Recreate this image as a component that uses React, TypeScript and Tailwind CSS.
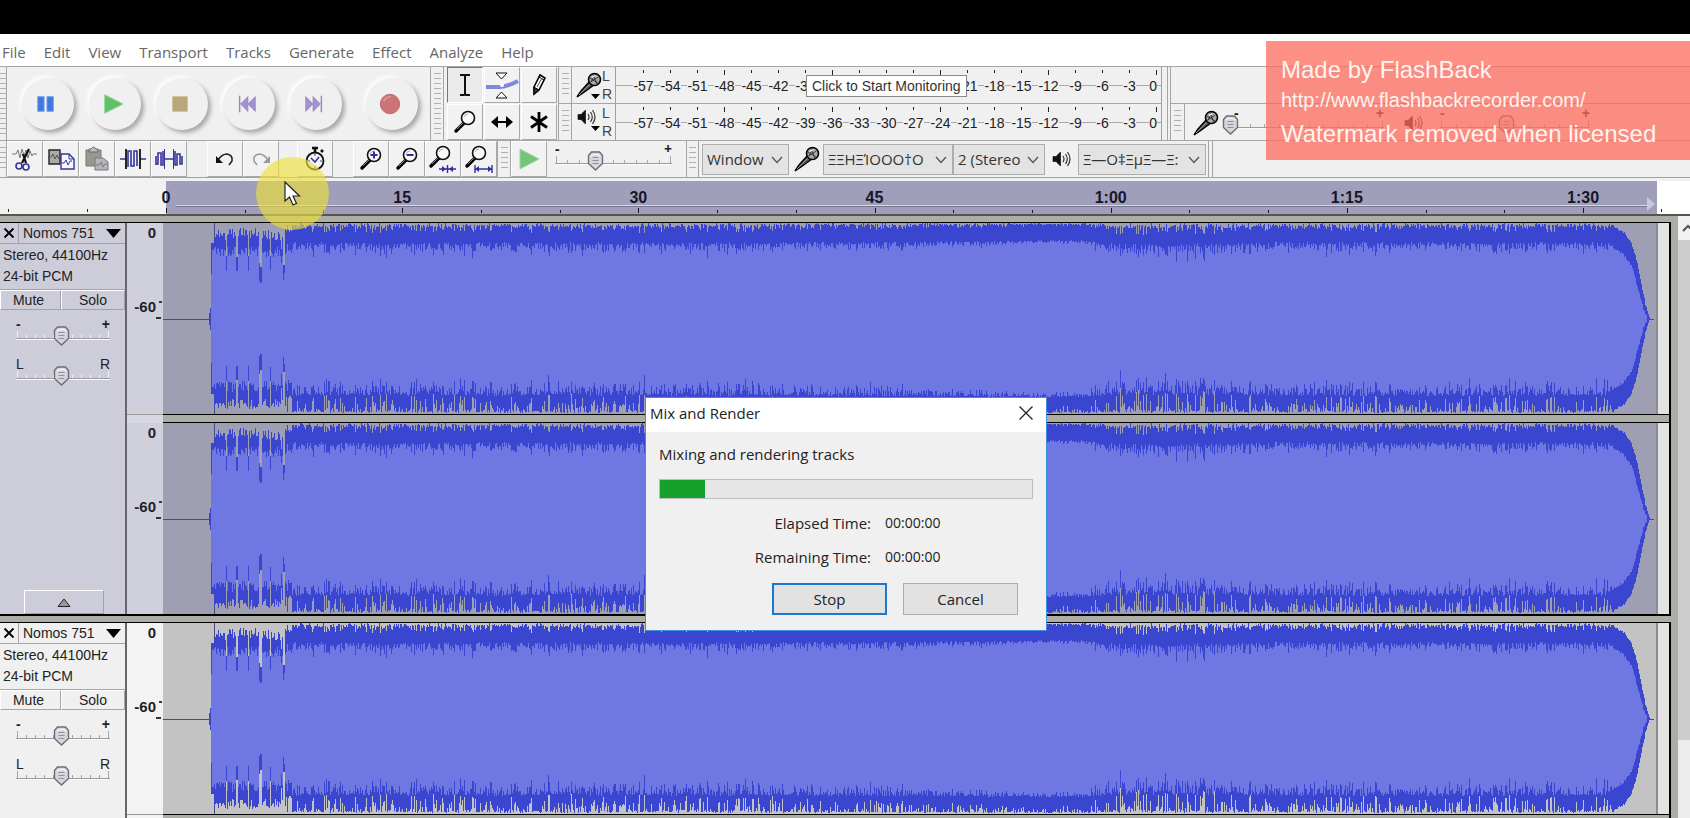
import { useState } from "react";
import type { ReactNode } from "react";
import { clsx } from "clsx";

const MENUS = ["File", "Edit", "View", "Transport", "Tracks", "Generate", "Effect", "Analyze", "Help"];
const METER_LABELS = [-57, -54, -51, -48, -45, -42, -39, -36, -33, -30, -27, -24, -21, -18, -15, -12, -9, -6, -3];
const RULER_LABELS = ["0", "15", "30", "45", "1:00", "1:15"];

/* ---------- waveform ---------- */

const WAVE_W = 1493;
const WAVE_H = 191;
const MID = 96;

// x, depth of the background gap, depth of the peak colour
const DIPS = [
  [63, 33, 48],
  [73, 34, 48],
  [74, 34, 48],
  [85, 33, 48],
  [96, 40, 58],
  [97, 44, 60],
  [98, 44, 60],
  [107, 33, 47],
  [118, 26, 40],
  [120, 42, 57],
  [121, 42, 50],
];

// how busy the edge is along the clip
const DENSITY = [[48, 1], [480, 1], [760, 0.7], [860, 0.35], [920, 0.35], [950, 1.25], [1070, 1.25], [1120, 0.9], [1493, 0.9]];

// how the level falls off at the end of the clip
const TAIL_OUTER = [[1450, 2], [1456, 6], [1461, 9], [1467, 17], [1470, 25], [1474, 39], [1478, 60], [1482, 80], [1487, 96]];
const TAIL_INNER = [[1450, 24], [1460, 30], [1465, 36], [1469, 43], [1475, 66], [1480, 84], [1485, 96]];

function random(seed: number) {
  let s = seed;
  return () => {
    s = (s * 1664525 + 1013904223) % 4294967296;
    return s / 4294967296;
  };
}

function lerp(points: number[][], x: number) {
  for (let i = 1; i < points.length; i++) {
    const [x0, y0] = points[i - 1];
    const [x1, y1] = points[i];
    if (x <= x1) return y0 + ((x - x0) / (x1 - x0)) * (y1 - y0);
  }
  return MID;
}

function buildWave() {
  const rnd = random(751);
  let peak = "";
  let rms = "";
  for (let x = 48; x < 1487; x++) {
    const d = lerp(DENSITY, x);
    const spike = Math.pow(rnd(), 4);
    let top: number;
    let bottom: number;
    let inTop: number;
    let inBottom: number;
    const dip = DIPS.find((p) => p[0] === x);
    if (x < 51) {
      top = bottom = 20;
      inTop = inBottom = x === 48 ? 51 : 27;
    } else if (dip) {
      top = bottom = dip[1];
      inTop = inBottom = dip[2];
    } else if (x < 123) {
      top = 5 + rnd() * 12;
      bottom = 5 + rnd() * 10;
      inTop = 24 + rnd() * 10;
      inBottom = 22 + rnd() * 12;
    } else {
      bottom = 1 + rnd() * 2 * d + spike * 18 * d;
      top = rnd() * 4 * d + spike * 7 * d;
      inTop = 16 + (rnd() + 1) * 3 * d + (spike * 9 + Math.pow(rnd(), 3) * 7) * d;
      inBottom = 16 + (rnd() + 1) * 2 * d + (spike * 13 + Math.pow(rnd(), 3) * 8) * d;
    }
    if (x >= 1450) {
      const o = lerp(TAIL_OUTER, x);
      const n = lerp(TAIL_INNER, x);
      top = bottom = o + rnd() * 2;
      inTop = inBottom = Math.min(MID, n + rnd() * 3);
    }
    peak += `M${x}.5 ${Math.round(top)}V${Math.round(WAVE_H - bottom)}`;
    if (inTop < MID - 2) rms += `M${x}.5 ${Math.round(inTop)}V${Math.round(WAVE_H - inBottom)}`;
  }
  return { peak, rms };
}

const WAVE = buildWave();

function Waveform({ selected }: { selected: boolean }) {
  return (
    <svg
      className={clsx("block h-[191px] min-w-0 flex-1", selected ? "bg-[#9f9fb3]" : "bg-[#c3c3c3]")}
      viewBox={`0 0 ${WAVE_W} ${WAVE_H}`}
      preserveAspectRatio="none"
      shapeRendering="crispEdges"
      role="img"
      aria-label="Waveform"
    >
      <path d={`M0 ${MID}.5H48M1480 ${MID}.5H1491`} stroke="#3b48c4" />
      <path d="M46.5 90V102M47.5 85V107" stroke="#3b48c4" />
      <path d="M51.5 0V191" stroke="#4a4a78" />
      <path d={WAVE.peak} stroke="#3a46cf" />
      <path d={WAVE.rms} stroke="#6f78e2" />
    </svg>
  );
}

/* ---------- small parts ---------- */

function Gripper({ className = "w-[13px]" }: { className?: string }) {
  return (
    <div className={clsx("flex shrink-0 justify-center border-r border-[#a5a5a5] py-1.5", className)}>
      <div className="h-full w-[7px] bg-[repeating-linear-gradient(#b0b0b0_0_1px,transparent_1px_5px)]" />
    </div>
  );
}

interface SliderProps {
  label: string;
  width: number;
  value: number;
  low?: string;
  high?: string;
  light?: boolean;
}

function Slider({ label, width, value, low = "-", high = "+", light }: SliderProps) {
  const [pos, setPos] = useState(value);
  const x = Math.round((width * pos) / 100);
  const ticks = Array.from({ length: 11 }, (_, i) => {
    const tx = Math.round((i * (width - 3)) / 10) + 1;
    return `M${tx}.5 ${i % 10 === 0 ? 9 : 13}V16`;
  }).join("");
  return (
    <div className="relative h-7 shrink-0" style={{ width }}>
      <div
        className={clsx("flex justify-between text-sm leading-3 text-[#222]", low === "-" && "font-bold")}
        aria-hidden="true"
      >
        <span>{low}</span>
        <span>{high}</span>
      </div>
      <svg className="absolute bottom-0 left-0 overflow-visible" width={width} height="20" viewBox={`0 0 ${width} 20`}>
        <path d={ticks} transform="translate(0 -4)" stroke={light ? "#f4f4f8" : "#a8a8a8"} />
        <path d={`M0 12.5H${width}`} stroke="#9a9a9f" />
        <path d={`M0 13.5H${width}`} stroke="#fafafa" />
        <g transform={`translate(${x - 7} 0)`}>
          <path d="M.5 4.5 3.5 1H11.5L14.5 4.5V12.5L7.5 19 .5 12.5Z" fill="#d6d6de" stroke="#6d6d72" strokeWidth="1.4" />
          <path d="M3 5Q7.500 1.500 12 5" fill="none" stroke="#fff" />
          <path d="M4.500 6.500h6M4.500 9.500h6M4.500 12.500h6" stroke="#8f8f99" />
        </g>
      </svg>
      <input
        type="range"
        aria-label={label}
        value={pos}
        onChange={(e) => setPos(Number(e.target.value))}
        className="absolute inset-0 h-full w-full opacity-0"
      />
    </div>
  );
}

function Mic() {
  return (
    <svg width="28" height="28" viewBox="0 0 28 28" className="shrink-0">
      <path d="M2 26 6 20 15 10 19 14 8 22Z" fill="#555" stroke="#000" strokeWidth="1.400" />
      <path d="M4 24 16 12" stroke="#999" />
      <circle cx="19.500" cy="8.500" r="6" fill="#aaa" stroke="#000" strokeWidth="1.600" />
      <path d="M15 7l8 5M18 3.500l4 10M15.500 11l8-5M20 3l-4 8" stroke="#222" strokeWidth=".8" />
      <path d="M17 6.500l3-2" stroke="#fff" strokeWidth="1.500" />
    </svg>
  );
}

function Speaker() {
  return (
    <svg width="20" height="18" viewBox="0 0 20 18" fill="none" stroke="#000" className="shrink-0">
      <path d="M1 6.500H4L8.500 2V16L4 11.500H1Z" fill="#111" strokeWidth=".6" />
      <path d="M11 6Q13 9 11 12M13.500 4Q17 9 13.500 14M15.500 2Q20.500 9 15.500 16" stroke="#333" strokeWidth="1.200" />
    </svg>
  );
}

function Magnifier({ viewBox = "0 0 32 32", children }: { viewBox?: string; children?: ReactNode }) {
  return (
    <svg width="32" height="32" viewBox={viewBox} fill="none">
      <path d="M7 25 15 17" stroke="#000" strokeWidth="3.400" strokeLinecap="round" />
      <path d="M8 23 14 17" stroke="#888" />
      <circle cx="19" cy="12" r="6.500" fill="#fafafa" stroke="#111" strokeWidth="1.600" />
      <path d="M15 11Q16 8 19 8" stroke="#aaa" />
      {children}
    </svg>
  );
}

function ToolButton({ label, pressed, children }: { label: string; pressed?: boolean; children: ReactNode }) {
  return (
    <button
      type="button"
      aria-label={label}
      className={clsx(
        "flex h-9 w-9 shrink-0 items-center justify-center border",
        pressed
          ? "border-t-[#777] border-r-white border-b-white border-l-[#777] bg-[#eaeaea]"
          : "border-t-white border-r-[#a8a8a8] border-b-[#a8a8a8] border-l-white bg-[#f2f2f2]"
      )}
    >
      {children}
    </button>
  );
}

function RoundButton({ label, children }: { label: string; children: ReactNode }) {
  return (
    <button
      type="button"
      aria-label={label}
      className="flex h-[52px] w-[52px] shrink-0 items-center justify-center rounded-full bg-[#f0f0f1] pr-1 shadow-[3px_3px_4px_#a9a9ac,-2px_-2px_4px_#ffffff]"
    >
      <svg width="24" height="24" viewBox="0 0 26 26">
        {children}
      </svg>
    </button>
  );
}

function Dropdown({ label, value, className }: { label: string; value: string; className: string }) {
  return (
    <div className={clsx("relative h-[31px] shrink-0", className)}>
      <select
        aria-label={label}
        defaultValue={value}
        className="h-full w-full appearance-none overflow-hidden border border-[#adadad] bg-[#e3e3e3] pr-6 pl-1 text-[15px] text-[#333] text-clip"
      >
        <option>{value}</option>
      </select>
      <svg className="pointer-events-none absolute top-3 right-1.5" width="12" height="8" viewBox="0 0 12 8">
        <path d="M1 1 6 6.500 11 1" fill="none" stroke="#555" strokeWidth="1.300" />
      </svg>
    </div>
  );
}

/* ---------- toolbars ---------- */

function TransportBar() {
  return (
    <div className="flex w-[424px] shrink-0 items-center border-r border-[#a5a5a5] pl-[15px]">
      <div className="flex gap-[15px]">
        <RoundButton label="Pause">
          <path d="M4 5h7v16H4zM14 5h7v16h-7z" fill="#3f78dc" stroke="#7fa4ec" />
        </RoundButton>
        <RoundButton label="Play">
          <path d="M4 3 24 13 4 23Z" fill="#5fc267" stroke="#8fd596" />
        </RoundButton>
        <RoundButton label="Stop">
          <path d="M5 5h16v16H5z" fill="#b9a77c" stroke="#cfc09a" />
        </RoundButton>
        <RoundButton label="Skip to Start">
          <path d="M5 4v18" stroke="#9484c0" strokeWidth="1.500" />
          <path d="M14 5v16L6 13ZM22 5v16L14 13Z" fill="#a591d2" stroke="#9484c0" strokeWidth=".8" />
        </RoundButton>
        <RoundButton label="Skip to End">
          <path d="M21 4v18" stroke="#9484c0" strokeWidth="1.500" />
          <path d="M4 5v16l8-8ZM12 5v16l8-8Z" fill="#a591d2" stroke="#9484c0" strokeWidth=".8" />
        </RoundButton>
      </div>
      <div className="ml-6">
        <RoundButton label="Record">
          <circle cx="13" cy="13" r="10.500" fill="#cd7376" stroke="#b9666a" />
          <path d="M6 10Q9 5 14 5" fill="none" stroke="#dfa0a2" strokeWidth="1.500" />
        </RoundButton>
      </div>
    </div>
  );
}

function ToolsBar() {
  return (
    <div className="grid shrink-0 grid-cols-3 content-center gap-px border-r border-[#a5a5a5] pr-px pl-[3px]">
      <ToolButton label="Selection Tool" pressed>
        <svg width="20" height="26" viewBox="0 0 20 26">
          <path d="M5 3h4l1 1 1-1h4M10 4v18M5 23h4l1-1 1 1h4" fill="none" stroke="#111" strokeWidth="2" />
        </svg>
      </ToolButton>
      <ToolButton label="Envelope Tool">
        <svg width="34" height="30" viewBox="0 0 34 30">
          <path d="M1 17H15Q24 16 33 11" fill="none" stroke="#8287dc" strokeWidth="4" />
          <circle cx="17" cy="15" r="2" fill="#fff" />
          <path d="M11 3H22L16.500 9ZM11 28H22L16.500 22Z" fill="#fff" stroke="#111" />
        </svg>
      </ToolButton>
      <ToolButton label="Draw Tool">
        <svg width="20" height="26" viewBox="0 0 20 26">
          <path d="M5 15 11 3 16 6 10 18 5 22Z" fill="#fff" stroke="#000" strokeWidth="1.600" />
          <path d="M5 15 10 18 5 22ZM10 5l5 3" fill="#333" stroke="#000" />
          <path d="M8 15l5-9" stroke="#555" />
        </svg>
      </ToolButton>
      <ToolButton label="Zoom Tool">
        <Magnifier />
      </ToolButton>
      <ToolButton label="Time Shift Tool">
        <svg width="26" height="16" viewBox="0 0 26 16">
          <path d="M6 8H20" stroke="#000" strokeWidth="2" />
          <path d="M2 8 9 2V14ZM24 8 17 2V14Z" />
        </svg>
      </ToolButton>
      <ToolButton label="Multi-Tool">
        <svg width="20" height="22" viewBox="0 0 20 22">
          <path d="M10 1V21M2 5.500 18 16.500M18 5.500 2 16.500" stroke="#000" strokeWidth="2.800" />
        </svg>
      </ToolButton>
    </div>
  );
}

function Meter({ label, icon }: { label: string; icon: ReactNode }) {
  return (
    <div className="flex h-[37px]">
      <Gripper />
      <div className="flex w-[43px] shrink-0">
        <button type="button" aria-label={label} className="flex w-[30px] flex-col items-center pt-1">
          {icon}
        </button>
        <div className="flex flex-col text-sm leading-[18px] text-[#444]">
          <span>L</span>
          <span>R</span>
        </div>
      </div>
      <div className="flex w-[547px] shrink-0 border-x border-[#a0a0a0] bg-[linear-gradient(#aaa,#aaa)] bg-[length:100%_1px] bg-[position:0_18px] bg-no-repeat pl-[14px]">
        {METER_LABELS.map((n) => (
          <div key={n} className="flex flex-1 flex-col items-center pt-[3px]">
            <i className={clsx("w-px bg-[#222]", n % 12 === 0 ? "mb-1 h-[5px]" : "mb-1.5 h-[3px]")} />
            <span className="bg-[#f0f0f0] text-sm leading-[14px] text-[#222]">{n}</span>
          </div>
        ))}
        <div className="flex w-[18px] flex-col items-end pt-[3px] pr-1">
          <i className="mb-1 h-[5px] w-px bg-[#222]" />
          <span className="bg-[#f0f0f0] text-sm leading-[14px] text-[#222]">0</span>
        </div>
      </div>
    </div>
  );
}

function MixerBar() {
  return (
    <div className="flex h-[37px]">
      <Gripper className="w-[14px]" />
      <div className="flex items-center pl-[7px]">
        <Mic />
        <div className="ml-[14px] pb-1">
          <Slider label="Recording Volume" width={150} value={-3} />
        </div>
        <div className="mr-4 ml-5">
          <Speaker />
        </div>
        <div className="pb-1">
          <Slider label="Playback Volume" width={150} value={44} />
        </div>
      </div>
    </div>
  );
}

function DownArrow() {
  return (
    <svg width="9" height="5" viewBox="0 0 9 5">
      <path d="M0 0H9L4.500 5Z" />
    </svg>
  );
}

function EditBar() {
  return (
    <div className="flex h-[37px] items-center border-b border-[#a0a0a0]">
      <Gripper className="h-full w-[7px]" />
      <ToolButton label="Cut">
        <svg width="28" height="26" viewBox="0 0 28 26" fill="none">
          <path d="M1 8h4l2-4 2 8 2-9 2 7 2-6 2 8 2-7 2 5 1-2h4" stroke="#777" />
          <path d="M18 3 11 17M12 8l3 9" stroke="#111" strokeWidth="2.200" />
          <circle cx="8" cy="20" r="3" stroke="#34349c" strokeWidth="1.600" />
          <circle cx="15" cy="21" r="3" stroke="#34349c" strokeWidth="1.600" />
        </svg>
      </ToolButton>
      <ToolButton label="Copy">
        <svg width="28" height="24" viewBox="0 0 28 24">
          <path d="M2 3H13V17H2Z" fill="#aaa" stroke="#222" strokeWidth="1.400" />
          <path d="M1 10h3l2-3 2 5 2-4 2 4" fill="none" stroke="#555" />
          <path d="M14 7H22L27 12V22H14Z" fill="#f8f8ff" stroke="#34349c" strokeWidth="1.400" />
          <path d="M22 7v5h5M15 16h2l2-3 2 5 2-4h2" fill="none" stroke="#34349c" />
        </svg>
      </ToolButton>
      <ToolButton label="Paste">
        <svg width="26" height="26" viewBox="0 0 26 26">
          <path d="M2 4H17V20H2Z" fill="#99998f" stroke="#77776f" />
          <path d="M5 6V3H7Q9.500 -1 12 3H14V6Z" fill="#bbb" stroke="#666" />
          <path d="M11 12H19L24 16V24H11Z" fill="#b5b5ba" stroke="#77777d" />
          <path d="M12 19h3l2-3 2 5 2-3h2" fill="none" stroke="#77777d" />
        </svg>
      </ToolButton>
      <ToolButton label="Trim Audio">
        <svg width="28" height="26" viewBox="0 0 28 26" fill="none">
          <path d="M1 13H7M21 13H27" stroke="#34349c" strokeWidth="1.400" />
          <path d="M7 3V23M21 3V23" stroke="#111" strokeWidth="1.800" />
          <path d="M9 21V5h3V20h3V5h3V20" stroke="#34349c" strokeWidth="1.600" />
        </svg>
      </ToolButton>
      <ToolButton label="Silence Audio">
        <svg width="30" height="26" viewBox="0 0 30 26" fill="none">
          <path d="M2 19V10M2 18h2V7h3V19h2V5M10 13h10M21 5V19h2V8h3V18h2V10" stroke="#34349c" strokeWidth="1.600" />
          <path d="M10.500 3v20M19.500 3v20" stroke="#34349c" />
        </svg>
      </ToolButton>
      <div className="ml-5 flex">
        <ToolButton label="Undo">
          <svg width="22" height="18" viewBox="0 0 22 18" fill="none">
            <path d="M4 10Q8 4 13 4Q19 5 18 11L15 15" stroke="#222" strokeWidth="1.600" />
            <path d="M2 6V13H9Z" fill="#111" />
          </svg>
        </ToolButton>
        <ToolButton label="Redo">
          <svg width="22" height="18" viewBox="0 0 22 18" fill="none">
            <path d="M18 10Q14 4 9 4Q3 5 4 11L7 15" stroke="#999" strokeWidth="1.500" />
            <path d="M20 6V13H13Z" fill="#999" />
          </svg>
        </ToolButton>
      </div>
      <div className="ml-[18px]">
        <ToolButton label="Sync-Lock Tracks">
          <svg width="24" height="28" viewBox="0 0 24 28" fill="none">
            <path d="M9 3h6M12 3v4M18 5l2 2" stroke="#111" strokeWidth="2.600" />
            <circle cx="12" cy="16" r="8.500" fill="#f4f4f4" stroke="#111" strokeWidth="1.800" />
            <path d="M8 13 12 17 16 12" stroke="#34349c" strokeWidth="1.600" />
            <path d="M12 9v2M12 21v2M5 16h2M17 16h2" stroke="#34349c" />
          </svg>
        </ToolButton>
      </div>
      <div className="ml-5 flex">
        <ToolButton label="Zoom In">
          <Magnifier>
            <path d="M15.500 12h7M19 8.500v7" stroke="#30309a" strokeWidth="2" />
          </Magnifier>
        </ToolButton>
        <ToolButton label="Zoom Out">
          <Magnifier>
            <path d="M15.500 12h7" stroke="#30309a" strokeWidth="2" />
          </Magnifier>
        </ToolButton>
        <ToolButton label="Fit Selection">
          <Magnifier viewBox="3 2 32 32">
            <path d="M15 28H32M23.500 24v8" stroke="#30309a" strokeWidth="1.400" />
            <path d="M22 28 18 25V31ZM25 28 29 25V31Z" fill="#30309a" />
          </Magnifier>
        </ToolButton>
        <ToolButton label="Fit Project">
          <Magnifier viewBox="3 2 32 32">
            <path d="M15 28H32M15 24v8M32 24v8" stroke="#30309a" strokeWidth="1.400" />
            <path d="M15 28 19 25V31ZM32 28 28 25V31Z" fill="#30309a" />
          </Magnifier>
        </ToolButton>
      </div>
      <Gripper className="h-full w-[14px] border-l" />
      <ToolButton label="Play-at-Speed">
        <svg width="22" height="24" viewBox="0 0 22 24">
          <path d="M2 2 21 12 2 22Z" fill="#74c47b" stroke="#9ad7a0" />
        </svg>
      </ToolButton>
      <div className="flex w-[139px] shrink-0 pb-1 pl-2">
        <Slider label="Playback Speed" width={117} value={34} />
      </div>
      <Gripper className="h-full w-[13px] border-l" />
      <div className="ml-[3px] flex items-center">
        <Dropdown label="Audio Host" value="Window" className="w-[87px]" />
        <div className="ml-1 flex w-[30px]">
          <Mic />
        </div>
        <Dropdown label="Recording Device" value="ΞΞHΞΊOOO†O" className="w-[130px]" />
        <Dropdown label="Recording Channels" value="2 (Stereo" className="w-[92px]" />
        <div className="flex w-[33px] justify-center">
          <Speaker />
        </div>
        <Dropdown label="Playback Device" value="Ξ—O‡ΞµΞ—Ξ:" className="w-[128px]" />
      </div>
      <div className="ml-0.5 h-full w-[5px] border-x border-[#a5a5a5]" />
    </div>
  );
}

/* ---------- timeline ---------- */

function RulerLabel({ text }: { text: string }) {
  return (
    <span className="block w-12 -translate-x-1/2 text-center text-base leading-[34px] font-bold text-[#16162a]">{text}</span>
  );
}

function Timeline() {
  return (
    <div className="flex h-[38px] border-b-2 border-[#555] bg-[#f1f1f1] pt-[3px]">
      <div className="flex w-[166px] items-end pb-0.5">
        <i className="ml-2 h-[3px] w-px bg-[#222]" />
        <i className="ml-[78px] h-[3px] w-px bg-[#222]" />
      </div>
      <div className="flex min-w-0 flex-1 bg-[#9f9fbb] bg-[linear-gradient(#77778c,#77778c),linear-gradient(#d8d8e4,#d8d8e4)] bg-[length:calc(100%-20px)_1px] bg-[position:10px_25px,10px_24px] bg-no-repeat">
        {RULER_LABELS.map((text) => (
          <div key={text} className="flex grow-[15] basis-0 flex-col">
            <div className="h-[27px]">
              <RulerLabel text={text} />
            </div>
            <div className="flex items-end">
              <i className="h-[5px] flex-1 border-l border-[#16162a]" />
              <i className="h-[3px] flex-1 border-l border-[#16162a]" />
              <i className="h-[3px] flex-1 border-l border-[#16162a]" />
            </div>
          </div>
        ))}
        <div className="flex grow-[4.7] basis-0 flex-col">
          <div className="flex h-[27px] justify-between">
            <RulerLabel text="1:30" />
            <svg className="mt-4 mr-0.5" width="8" height="14" viewBox="0 0 8 14">
              <path d="M0 0 8 7 0 14Z" fill="#c9c9dc" />
            </svg>
          </div>
          <i className="h-[5px] border-l border-[#16162a]" />
        </div>
      </div>
      <div className="flex w-[33px] items-end bg-white pb-0.5">
        <i className="ml-1 h-[3px] w-px bg-[#222]" />
      </div>
    </div>
  );
}

/* ---------- tracks ---------- */

function TrackPanel({ selected }: { selected: boolean }) {
  const edge = selected ? "border-[#a2a2ae]" : "border-[#a6a6a6]";
  const face = selected
    ? "border-t-white border-l-white border-r-[#a2a2ae] border-b-[#a2a2ae]"
    : "border-t-white border-l-white border-r-[#a6a6a6] border-b-[#a6a6a6]";
  return (
    <div
      className={clsx(
        "flex w-[127px] shrink-0 flex-col border-r-2 border-r-[#66666c] text-sm text-[#222]",
        selected ? "bg-[#cdcdda]" : "bg-[#f0f0f0]"
      )}
    >
      <div className={clsx("flex h-[21px] border-b", edge)}>
        <button type="button" aria-label="Close track" className={clsx("flex w-[19px] items-center justify-center border-r", edge)}>
          <svg width="12" height="12" viewBox="0 0 12 12">
            <path d="M1.500 1.500 10.500 10.500M10.500 1.500 1.500 10.500" stroke="#000" strokeWidth="1.800" />
          </svg>
        </button>
        <button type="button" className="flex flex-1 items-center justify-between px-1">
          Nomos 751
          <svg width="15" height="9" viewBox="0 0 15 9">
            <path d="M0 0H15L7.500 9Z" />
          </svg>
        </button>
      </div>
      <div className="flex h-[45px] flex-col pt-px pl-[3px] leading-[21px] whitespace-nowrap">
        <span>Stereo, 44100Hz</span>
        <span>24-bit PCM</span>
      </div>
      <div className={clsx("flex h-[21px] border-t", edge)}>
        <button type="button" className={clsx("w-[61px] border pr-1 leading-none", face)}>
          Mute
        </button>
        <button type="button" className={clsx("flex-1 border leading-none", face)}>
          Solo
        </button>
      </div>
      <div className="flex flex-col gap-3 pt-2 pl-4">
        <Slider label="Gain" width={94} value={48} light={selected} />
        <Slider label="Pan" width={94} value={48} low="L" high="R" light={selected} />
      </div>
      <button
        type="button"
        aria-label="Collapse track"
        className={clsx("mt-auto ml-6 flex h-6 w-20 items-center justify-center border", face)}
      >
        <svg width="14" height="9" viewBox="0 0 14 9">
          <path d="M1 8.500 7 1 13 8.500Z" fill="#999" stroke="#222" />
        </svg>
      </button>
    </div>
  );
}

function Channel({ selected }: { selected: boolean }) {
  return (
    <div className="flex h-[191px]">
      <div
        className={clsx(
          "flex w-9 shrink-0 flex-col items-end pr-[7px] text-[15px] leading-5 font-bold text-[#222]",
          selected ? "bg-[#d0d0dc]" : "bg-[#f3f3f3]"
        )}
      >
        <span>0</span>
        <div className="mt-[54px] -mr-[6px] flex">
          <span>-60</span>
          <i className="mt-1 ml-[3px] h-0.5 w-[3px] bg-[#333]" />
        </div>
        <i className="-mr-[5px] h-0.5 w-[5px] bg-[#333]" />
      </div>
      <Waveform selected={selected} />
      <div className="w-[13px] shrink-0 border-l-2 border-[#8b8b90] bg-[#e2e2e2]" />
    </div>
  );
}

function Track({ selected = false }: { selected?: boolean }) {
  return (
    <section className="mb-1.5 flex shrink-0 border-t border-r-2 border-b-2 border-black" aria-label="Nomos 751">
      <TrackPanel selected={selected} />
      <div className="min-w-0 flex-1">
        <Channel selected={selected} />
        <div className="flex h-[9px]">
          <div className={clsx("w-9 border-t border-[#999]", selected ? "bg-[#d8d8e2]" : "bg-[#f3f3f3]")} />
          <div className="flex-1 border-y border-black bg-[#adada8]" />
        </div>
        <Channel selected={selected} />
      </div>
    </section>
  );
}

/* ---------- overlays ---------- */

function ProgressDialog() {
  return (
    <div
      role="dialog"
      aria-label="Mix and Render"
      className="absolute top-[397px] left-[645px] flex w-[402px] flex-col border border-[#3f8fe0] bg-[#f0f0f0] text-[15px] text-[#222]"
    >
      <div className="flex h-[34px] items-center justify-between bg-white pr-[13px] pb-1 pl-1">
        <h2>Mix and Render</h2>
        <button type="button" aria-label="Close">
          <svg width="14" height="14" viewBox="0 0 14 14">
            <path d="M.5.5 13.500 13.500M13.500.5.5 13.500" stroke="#222" strokeWidth="1.300" />
          </svg>
        </button>
      </div>
      <div className="flex flex-col px-[13px] pt-[10px]">
        <p className="leading-6">Mixing and rendering tracks</p>
        <div
          role="progressbar"
          aria-valuenow={12}
          aria-label="Mixing and rendering tracks"
          className="mt-[13px] h-5 border border-[#bcbcbc] bg-[#e6e6e6]"
        >
          <div className="h-full bg-[#16a02c]" style={{ width: "12%" }} />
        </div>
        <dl className="mt-[7px] grid grid-cols-[212px_1fr] gap-x-[14px] leading-[34px]">
          <dt className="text-right">Elapsed Time:</dt>
          <dd className="text-sm leading-[34px]">00:00:00</dd>
          <dt className="text-right">Remaining Time:</dt>
          <dd className="text-sm leading-[34px]">00:00:00</dd>
        </dl>
      </div>
      <div className="mt-[9px] mb-[15px] flex justify-end gap-4 pr-7">
        <button type="button" className="h-8 w-[115px] border-2 border-[#1a78d2] bg-[#e2e2e2]">
          Stop
        </button>
        <button type="button" className="h-8 w-[115px] border border-[#adadad] bg-[#e2e2e2]">
          Cancel
        </button>
      </div>
    </div>
  );
}

function Watermark() {
  return (
    <div className="absolute top-[41px] right-0 h-[119px] w-[424px] bg-[#ff6b5c]/75 pt-[15px] pl-[15px] text-2xl leading-9 whitespace-nowrap text-[#fff3ef]">
      <p className="leading-7">Made by FlashBack</p>
      <p className="text-xl leading-8">
        <a href="http://www.flashbackrecorder.com/">http://www.flashbackrecorder.com/</a>
      </p>
      <p>Watermark removed when licensed</p>
    </div>
  );
}

function Pointer() {
  return (
    <div className="pointer-events-none absolute top-[157px] left-[256px] h-[73px] w-[73px] rounded-full bg-[#ecdf3c]/65">
      <svg className="mt-6 ml-7" width="18" height="26" viewBox="0 0 18 26">
        <path d="M1 1V20L5.500 16 9 24 12.500 22.500 9 15H15.500Z" fill="#fff" stroke="#222" strokeWidth="1.200" />
      </svg>
    </div>
  );
}

export default function App() {
  return (
    <div className="relative flex h-screen flex-col overflow-hidden bg-[#f0f0f0] font-['Liberation_Sans',Arial,sans-serif]">
      <div className="h-[34px] shrink-0 bg-black" />
      <nav className="flex h-8 shrink-0 items-center gap-[18px] bg-white pt-1 pl-0.5 font-['Open_Sans',sans-serif] text-[15px] text-[#666]">
        {MENUS.map((m) => (
          <button key={m} type="button">
            {m}
          </button>
        ))}
      </nav>

      <div className="flex h-[75px] shrink-0 border-y border-[#a5a5a5]">
        <Gripper className="w-[7px]" />
        <TransportBar />
        <Gripper />
        <ToolsBar />
        <div className="flex flex-col border-r border-[#a5a5a5] pr-[5px]">
          <Meter
            label="Recording meter"
            icon={
              <div className="flex items-end">
                <Mic />
                <div className="-ml-3">
                  <DownArrow />
                </div>
              </div>
            }
          />
          <div className="border-t border-[#a5a5a5]">
            <Meter
              label="Playback meter"
              icon={
                <>
                  <Speaker />
                  <div className="ml-4">
                    <DownArrow />
                  </div>
                </>
              }
            />
          </div>
        </div>
        <div className="ml-0.5 flex-1 border-l border-[#a5a5a5]">
          <div className="h-[37px] border-b border-[#a5a5a5]" />
          <MixerBar />
        </div>
      </div>

      <div className="shrink-0 font-['Open_Sans','Noto_Sans',sans-serif]">
        <EditBar />
      </div>
      <div className="shrink-0">
        <Timeline />
      </div>

      <div className="flex min-h-0 flex-1">
        <div className="flex min-w-0 flex-1 flex-col overflow-hidden bg-[#adada8] pt-1.5 pr-[7px]">
          <Track selected />
          <Track />
        </div>
        <div className="flex w-3 shrink-0 flex-col bg-[#ececec]">
          <button type="button" aria-label="Scroll up" className="flex h-6 items-center justify-end overflow-hidden bg-[#f2f2f2]">
            <svg width="8" height="9" viewBox="0 0 8 9">
              <path d="M1 7 6 2 11 7" fill="none" stroke="#555" strokeWidth="2" />
            </svg>
          </button>
          <div className="h-[500px] bg-[#cdcdcd]" />
        </div>
      </div>

      <div
        role="tooltip"
        className="absolute top-[75px] left-[806px] border border-[#8a8a8a] bg-white px-[5px] text-sm leading-5 text-[#333]"
      >
        Click to Start Monitoring
      </div>
      <Watermark />
      <Pointer />
      <div className="font-['Open_Sans',sans-serif]">
        <ProgressDialog />
      </div>
    </div>
  );
}
